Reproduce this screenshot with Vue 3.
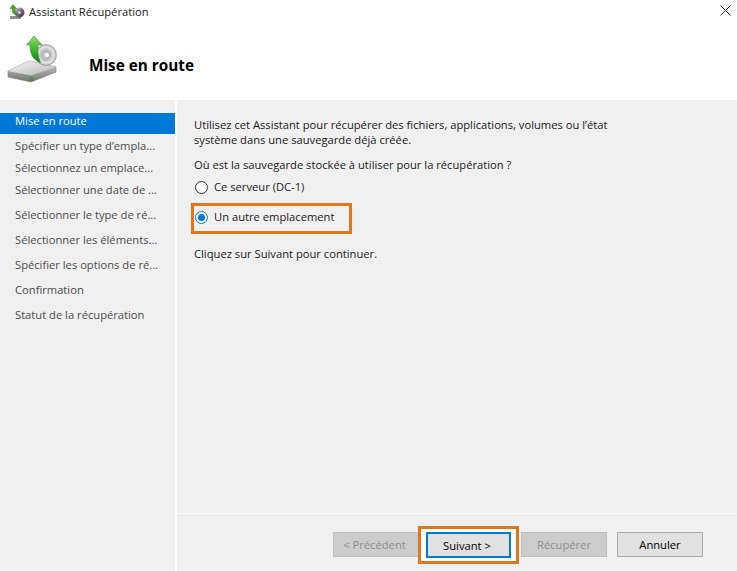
<script setup>
const steps = [
  { label: 'Mise en route', cls: 'active' },
  { label: 'Spécifier un type d’empla...', cls: 'tall' },
  { label: 'Sélectionnez un emplace...', cls: 'short' },
  { label: 'Sélectionner une date de ...', cls: 'short' },
  { label: 'Sélectionner le type de ré...', cls: 'tall' },
  { label: 'Sélectionner les éléments...', cls: 'tall' },
  { label: 'Spécifier les options de ré...', cls: 'tall' },
  { label: 'Confirmation', cls: 'tall' },
  { label: 'Statut de la récupération', cls: 'tall' }
]
</script>

<template>
  <div class="window">
    <div class="titlebar">
      <svg class="small-icon" width="16" height="16" viewBox="0 0 16 16">
        <defs>
          <linearGradient id="sd" x1="0" y1="0" x2="1" y2="1"><stop offset="0" stop-color="#d8d8e0"/><stop offset="0.5" stop-color="#77607e"/><stop offset="1" stop-color="#3d3a44"/></linearGradient>
        </defs>
        <rect x="1" y="12" width="11" height="3" fill="#8d9089"/>
        <circle cx="10.5" cy="8.5" r="5" fill="url(#sd)"/>
        <circle cx="10.5" cy="8.5" r="1.3" fill="#e9e9e9"/>
        <path d="M4 0.5 L7.5 4.5 H6 C6 7 6.5 9 8 11 C5 11 3 9 3 4.5 H1 Z" fill="#4ea82e" stroke="#2f7a1c" stroke-width="0.5"/>
      </svg>
      <span class="title">Assistant Récupération</span>
      <svg class="close" width="11" height="11" viewBox="0 0 11 11"><path d="M0.5 0.5 L10.5 10.5 M10.5 0.5 L0.5 10.5" stroke="#222" stroke-width="1" fill="none"/></svg>
    </div>

    <header class="header">
      <svg class="big-icon" width="52" height="52" viewBox="0 0 52 52">
        <defs>
          <linearGradient id="hd" x1="0" y1="0" x2="0" y2="1"><stop offset="0" stop-color="#d5d6d4"/><stop offset="1" stop-color="#6f716b"/></linearGradient>
          <linearGradient id="top" x1="0" y1="0" x2="1" y2="1"><stop offset="0" stop-color="#f6f6f6"/><stop offset="1" stop-color="#b5b7b4"/></linearGradient>
          <radialGradient id="cd" cx="0.5" cy="0.5" r="0.55"><stop offset="0" stop-color="#f4f4f4"/><stop offset="0.35" stop-color="#b4b4b8"/><stop offset="0.7" stop-color="#e6e6e8"/><stop offset="1" stop-color="#8f9093"/></radialGradient>
          <linearGradient id="ar" x1="0" y1="0" x2="0" y2="1"><stop offset="0" stop-color="#9adc70"/><stop offset="0.5" stop-color="#3fb52c"/><stop offset="1" stop-color="#1d7f20"/></linearGradient>
        </defs>
        <path d="M1 37 L22 27 L49 33 L49 38 L24 48 L1 43 Z" fill="url(#hd)" stroke="#7a7a7a" stroke-width="0.6"/>
        <path d="M1 37 L22 27 L49 33 L24 41.5 Z" fill="url(#top)"/>
        <rect x="23" y="42.5" width="2.5" height="4.5" fill="#3e9a35"/>
        <circle cx="39" cy="21" r="10.5" fill="url(#cd)" stroke="#8d8d90" stroke-width="0.5"/>
        <circle cx="40" cy="21" r="2.4" fill="#fff" stroke="#999" stroke-width="0.5"/>
        <path d="M27 2 L35 11 H31 C30.5 17 31 23 33.5 28.5 C26 26 23 20 23 11 H19.5 Z" fill="url(#ar)" stroke="#1f8a25" stroke-width="0.5"/>
      </svg>
      <h1 class="heading">Mise en route</h1>
    </header>

    <div class="body">
      <nav class="sidebar">
        <div v-for="s in steps" :key="s.label" class="step" :class="s.cls">{{ s.label }}</div>
      </nav>
      <div class="main">
        <div class="content">
          <p class="intro">Utilisez cet Assistant pour récupérer des fichiers, applications, volumes ou l’état<br>système dans une sauvegarde déjà créée.</p>
          <p class="question">Où est la sauvegarde stockée à utiliser pour la récupération ?</p>
          <label class="radio first"><span class="dot"></span>Ce serveur (DC-1)</label>
          <div class="mark-radio">
            <label class="radio"><span class="dot on"></span>Un autre emplacement</label>
          </div>
          <p class="next">Cliquez sur Suivant pour continuer.</p>
        </div>
        <footer class="footer">
          <button class="btn prev" disabled>&lt; Précédent</button>
          <span class="mark-btn"><button class="btn primary">Suivant &gt;</button></span>
          <button class="btn" disabled>Récupérer</button>
          <button class="btn cancel">Annuler</button>
        </footer>
      </div>
    </div>
  </div>
</template>

<style scoped>
.window {
  width: 737px;
  height: 571px;
  display: flex;
  flex-direction: column;
  overflow: hidden;
  background: #fff;
  font-family: "Open Sans", "Noto Sans", sans-serif;
  font-size: 11.2px;
  color: #1a1a1a;
}
.titlebar {
  height: 23px;
  flex: none;
  display: flex;
  align-items: center;
  padding-left: 9px;
}
.small-icon { margin-right: 4px; }
.title { flex: 1; color: #222; }
.close { margin-right: 6px; margin-top: -2px; }
.header {
  height: 77px;
  flex: none;
  display: flex;
  align-items: flex-start;
}
.big-icon { margin: 11px 0 0 7px; }
.heading {
  margin: 29px 0 0 30px;
  font-size: 15.3px;
  font-weight: 700;
  color: #000;
  line-height: 26px;
}
.body {
  flex: 1;
  display: flex;
  min-height: 0;
}
.sidebar {
  width: 175px;
  flex: none;
  background: #f0f0f0;
  padding-top: 13px;
  box-sizing: border-box;
  color: #4d4d4d;
}
.step {
  padding-left: 15px;
  white-space: nowrap;
  height: 22px;
  line-height: 19px;
}
.step.active { background: #0078d7; color: #fff; height: 21px; line-height: 15px; margin-bottom: -1px; }
.step.tall { margin-top: 3px; }
.step.short { margin-top: 0; }
.main {
  flex: 1;
  margin-left: 2px;
  display: flex;
  flex-direction: column;
  background: #f0f0f0;
  min-width: 0;
}
.content {
  flex: 1;
  padding: 17px 0 0 17px;
}
p { margin: 0; }
.intro { line-height: 15px; }
.question { margin-top: 10px; line-height: 15px; }
.radio {
  display: flex;
  align-items: center;
  line-height: 16px;
}
.radio.first { margin-top: 7px; }
.dot {
  width: 11px;
  height: 11px;
  border: 1px solid #333;
  border-radius: 50%;
  background: #fff;
  margin-left: 1px;
  margin-right: 6px;
  flex: none;
  position: relative;
}
.dot.on { border-color: #0078d7; }
.dot.on::after {
  content: "";
  position: absolute;
  inset: 2px;
  border-radius: 50%;
  background: #0078d7;
}
.mark-radio {
  width: 161px;
  height: 31px;
  box-sizing: border-box;
  border: 3px solid #e2761c;
  margin: 8px 0 0 -3px;
  padding: 3px 0 0 0;
}
.next { margin-top: 12px; line-height: 16px; }
.footer {
  height: 58px;
  flex: none;
  border-top: 1px solid #fff;
  box-sizing: border-box;
  display: flex;
  align-items: flex-start;
  padding: 18px 0 0 156px;
}
.btn {
  font: inherit;
  width: 86px;
  height: 25px;
  padding: 0;
  background: #e1e1e1;
  border: 1px solid #adadad;
  color: #000;
  box-sizing: border-box;
}
.btn:disabled {
  background: #cccccc;
  border-color: #bfbfbf;
  color: #8e8e8e;
}
.btn.prev { margin-right: -1px; padding-right: 3px; }
.mark-btn {
  display: block;
  position: relative;
  width: 101px;
  height: 38px;
  box-sizing: border-box;
  border: 3px solid #e2761c;
  padding: 3px 5px;
  margin: -6px 2px 0 0;
  background: #fff;
}
.btn.primary {
  display: block;
  width: 85px;
  height: 26px;
  padding-right: 3px;
  border: 2px solid #0078d7;
}
.btn.cancel { margin-left: 10px; }
</style>
